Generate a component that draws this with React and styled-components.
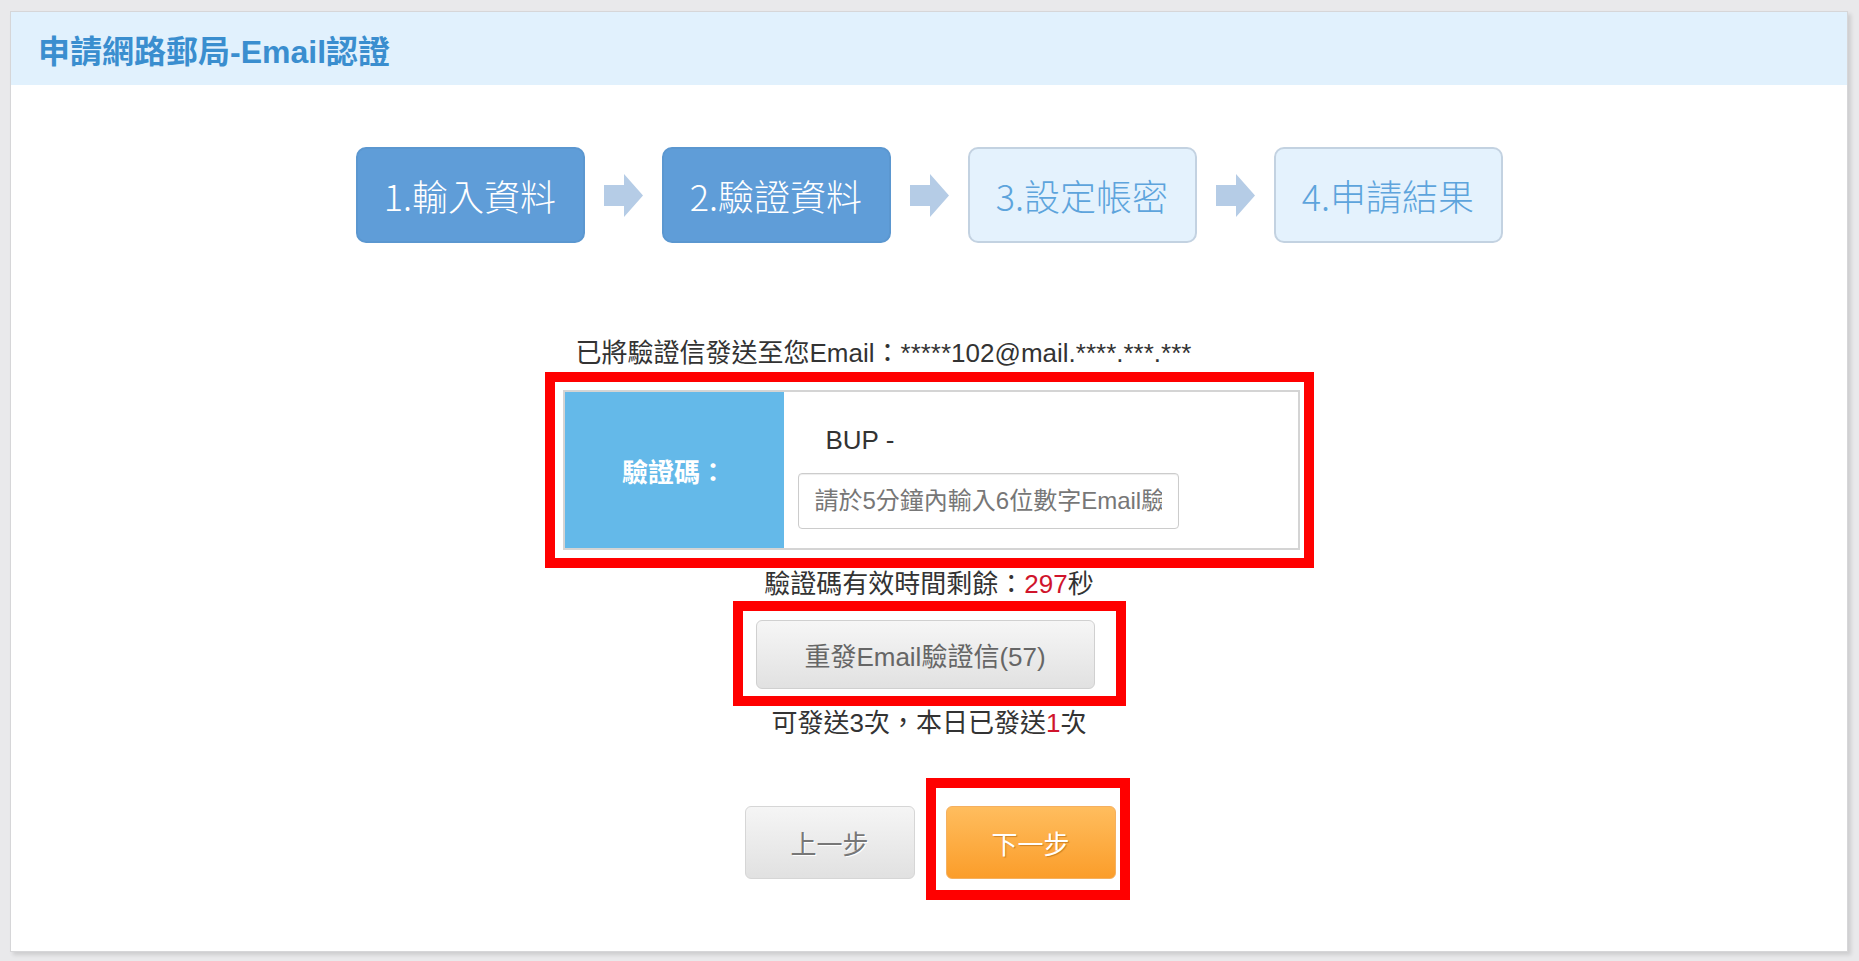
import styled, { createGlobalStyle, css } from 'styled-components';

const GlobalStyle = createGlobalStyle`
  html, body {
    margin: 0;
    padding: 0;
    background: #e9e9eb;
  }
  body {
    font-family: "Liberation Sans", "Noto Sans CJK TC", sans-serif;
    color: #333;
  }
  * {
    box-sizing: border-box;
  }
`;

// Layout
const Page = styled.div`
  height: 961px;
  padding: 11px 11px 9px 10px;
`;

const Panel = styled.div`
  height: 941px;
  background: #fff;
  border: 1px solid #d6d6d8;
  box-shadow: 3px 3px 4px rgba(0, 0, 0, 0.12);
  display: flex;
  flex-direction: column;
`;

const Header = styled.div`
  height: 73px;
  background: #e1f1fd;
  display: flex;
  align-items: center;
  padding-left: 27px;
`;

const Title = styled.h1`
  margin: 0;
  font-size: 32px;
  font-weight: bold;
  color: #3a8ecf;
`;

// Steps
const StepsRow = styled.div`
  display: flex;
  justify-content: center;
  align-items: center;
  margin-top: 62px;
`;

const Step = styled.div`
  width: 229px;
  height: 96px;
  border-radius: 10px;
  border: 2px solid;
  display: flex;
  align-items: center;
  justify-content: center;
  font-family: "Noto Sans CJK TC", sans-serif;
  font-weight: 300;
  font-size: 36px;
  ${(p) =>
    p.$active
      ? css`
          background: #5f9dd8;
          border-color: #5b97d0;
          color: #fff;
        `
      : css`
          background: #e4f2fd;
          border-color: #c3d2e1;
          color: #5da4dc;
        `}
`;

const ArrowSlot = styled.div`
  width: 77px;
  display: flex;
  justify-content: center;
  align-items: center;
`;

const StepArrow = () => (
  <ArrowSlot>
    <svg width="39" height="43" viewBox="0 0 39 43">
      <path d="M0 11 H20 V0 L39 21.5 L20 43 V32 H0 Z" fill="#b5cce6" />
    </svg>
  </ArrowSlot>
);

// Content
const Content = styled.div`
  display: flex;
  flex-direction: column;
  align-items: center;
`;

const Block = styled.div`
  width: 769px;
  margin-top: 91px;
`;

const EmailLine = styled.div`
  font-size: 26px;
  line-height: 38px;
  padding-left: 31px;
  white-space: nowrap;
`;

const Highlight = styled.div`
  border: 10px solid #ff0000;
  padding: ${(p) => p.$pad};
`;

const CodeTable = styled.div`
  display: flex;
  height: 160px;
  border: 2px solid #d4d4d4;
`;

const LabelCell = styled.div`
  width: 219px;
  background: #64b9e9;
  color: #fff;
  font-size: 26px;
  font-weight: bold;
  display: flex;
  align-items: center;
  justify-content: center;
`;

const InputCell = styled.div`
  flex: 1;
  padding: 30px 14px 0;
  display: flex;
  flex-direction: column;
  align-items: flex-start;
`;

const Prefix = styled.div`
  font-size: 26px;
  line-height: 36px;
  padding-left: 28px;
  color: #333;
`;

const CodeInput = styled.input`
  margin-top: 15px;
  width: 381px;
  height: 56px;
  border: 1px solid #cccccc;
  border-radius: 4px;
  box-shadow: inset 0 1px 1px rgba(0, 0, 0, 0.075);
  padding: 0 16px;
  font-family: "Liberation Sans", "Noto Sans CJK TC", sans-serif;
  font-size: 24px;
  color: #333;
  outline: none;

  &::placeholder {
    color: #777;
  }
`;

const InfoLine = styled.div`
  font-size: 26px;
  line-height: ${(p) => p.$lh || '33px'};
  color: #333;
  white-space: nowrap;
`;

const Red = styled.span`
  color: #d0142c;
`;

const ResendButton = styled.button`
  width: 339px;
  height: 69px;
  border: 1px solid #d0d0d0;
  border-radius: 6px;
  background: linear-gradient(#f6f6f6, #e1e1e1);
  color: #666;
  font-family: "Liberation Sans", "Noto Sans CJK TC", sans-serif;
  font-size: 26px;
  cursor: pointer;
`;

const NavRow = styled.div`
  margin-top: 38px;
  display: flex;
  align-items: flex-start;
  gap: 11px;
  padding-left: 16px;
`;

const NavButton = styled.button`
  width: 170px;
  height: 73px;
  border-radius: 6px;
  font-family: "Liberation Sans", "Noto Sans CJK TC", sans-serif;
  font-size: 26px;
  cursor: pointer;
  ${(p) =>
    p.$primary
      ? css`
          border: 1px solid #f5b060;
          background: linear-gradient(#ffbd5e, #fb9d2a);
          color: #fff;
          text-shadow: 1px 1px 1px rgba(150, 80, 0, 0.45);
        `
      : css`
          margin-top: 28px;
          border: 1px solid #d6d6d6;
          background: linear-gradient(#f5f5f5, #e1e1e1);
          color: #777;
          text-shadow: 1px 1px 0 #fff;
        `}
`;

const steps = ['1.輸入資料', '2.驗證資料', '3.設定帳密', '4.申請結果'];

export default function App() {
  return (
    <>
      <GlobalStyle />
      <Page>
        <Panel>
          <Header>
            <Title>申請網路郵局-Email認證</Title>
          </Header>

          <StepsRow>
            {steps.map((s, i) => (
              <div key={s} style={{ display: 'contents' }}>
                {i > 0 && <StepArrow />}
                <Step $active={i < 2}>{s}</Step>
              </div>
            ))}
          </StepsRow>

          <Content>
            <Block>
              <EmailLine>已將驗證信發送至您Email：*****102@mail.****.***.***</EmailLine>
              <Highlight $pad="8px 4px 8px 8px">
                <CodeTable>
                  <LabelCell>驗證碼：</LabelCell>
                  <InputCell>
                    <Prefix>BUP -</Prefix>
                    <CodeInput placeholder="請於5分鐘內輸入6位數字Email驗證碼" />
                  </InputCell>
                </CodeTable>
              </Highlight>
            </Block>

            <InfoLine>
              驗證碼有效時間剩餘：<Red>297</Red>秒
            </InfoLine>

            <Highlight $pad="9px 21px 7px 13px">
              <ResendButton>重發Email驗證信(57)</ResendButton>
            </Highlight>

            <InfoLine $lh="34px">
              可發送3次，本日已發送<Red>1</Red>次
            </InfoLine>

            <NavRow>
              <NavButton>上一步</NavButton>
              <Highlight $pad="18px 4px 11px 10px">
                <NavButton $primary>下一步</NavButton>
              </Highlight>
            </NavRow>
          </Content>
        </Panel>
      </Page>
    </>
  );
}
